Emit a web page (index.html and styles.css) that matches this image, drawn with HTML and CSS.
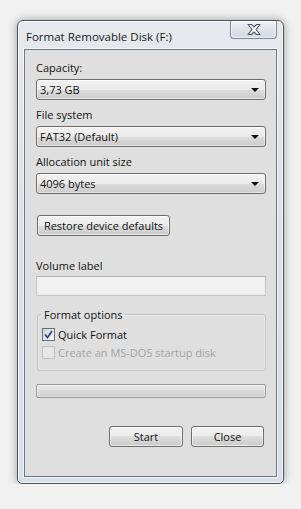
FILE: index.html
```html
<!DOCTYPE html>
<html lang="en">
	<head>
		<meta charset="UTF-8">
		<title>Format Removable Disk (F:)</title>
		<link rel="stylesheet" href="styles.css">
	</head>
	<body>
		<div class="window">
			<div class="titlebar">
				<span class="title">Format Removable Disk (F:)</span>
				<span class="close">
					<svg width="14" height="11" viewBox="0 0 14 11">
						<polygon points="1,0.5 4.5,0.5 7,3 9.5,0.5 13,0.5 9,5.5 13,10.5 9.5,10.5 7,8 4.5,10.5 1,10.5 5,5.5" fill="#fbfbfb" stroke="#4f5863" stroke-width="1.1" stroke-linejoin="round"/>
					</svg>
				</span>
			</div>
			<div class="client">
				<p class="lbl first">Capacity:</p>
				<div class="combo"><span>3,73 GB</span><i class="arrow"></i></div>

				<p class="lbl">File system</p>
				<div class="combo"><span>FAT32 (Default)</span><i class="arrow"></i></div>

				<p class="lbl">Allocation unit size</p>
				<div class="combo"><span>4096 bytes</span><i class="arrow"></i></div>

				<div class="btn restore">Restore device defaults</div>

				<p class="lbl vol">Volume label</p>
				<div class="textbox"></div>

				<fieldset class="group">
					<legend>Format options</legend>
					<div class="check">
						<span class="box on">
							<svg width="9" height="9" viewBox="0 0 9 9">
								<path d="M1 4.5 L3.5 7.5 L8 1" fill="none" stroke="#2c4a8a" stroke-width="1.8"/>
							</svg>
						</span>
						<span>Quick Format</span>
					</div>
					<div class="check off">
						<span class="box"></span>
						<span>Create an MS-DOS startup disk</span>
					</div>
				</fieldset>

				<div class="progress"></div>

				<div class="actions">
					<div class="btn start">Start</div>
					<div class="btn close-btn">Close</div>
				</div>
			</div>
		</div>
	</body>
</html>
```
FILE: styles.css
```css
* {
	margin: 0;
	padding: 0;
	box-sizing: border-box;
}

body {
	background: #f0f0f0;
	font-family: "Open Sans", "Noto Sans", sans-serif;
	font-size: 11px;
	color: #111;
}

/*窗口*/
.window {
	width: 267px;
	height: 464px;
	margin: 20px 0 0 17px;
	padding: 0 6px 6px;
	display: flex;
	flex-direction: column;
	border: 1px solid #4e545b;
	border-radius: 6px 6px 5px 5px;
	background: linear-gradient(#e6e9ed, #dbe2ea 40%, #d7dfe8);
	box-shadow: 0 0 8px rgba(0, 0, 0, 0.35), inset 0 0 0 1px rgba(255, 255, 255, 0.7);
}

.titlebar {
	height: 28px;
	display: flex;
	justify-content: space-between;
	align-items: flex-start;
}

.title {
	padding: 8px 0 0 2px;
	line-height: 16px;
	font-size: 11.5px;
	color: #1a1a1a;
}

.close {
	width: 47px;
	height: 18px;
	display: flex;
	align-items: center;
	justify-content: center;
	border: 1px solid #7e8792;
	border-top: none;
	border-radius: 0 0 4px 4px;
	background: linear-gradient(#eef1f4, #dfe4ea 50%, #d3dae3);
	box-shadow: inset 0 0 0 1px rgba(255, 255, 255, 0.6);
}

.client {
	flex: 1;
	padding: 0 10px 0 11px;
	display: flex;
	flex-direction: column;
	background: #dfdfdf;
	border: 1px solid #6f7780;
	box-shadow: 0 0 0 1px rgba(255, 255, 255, 0.6);
}

/*表单*/
.lbl {
	height: 15px;
	line-height: 15px;
	margin-top: 7px;
	margin-bottom: 4px;
}

.lbl.first {
	margin-top: 10px;
}

.lbl.vol {
	margin-top: 22px;
	margin-bottom: 3px;
}

.combo {
	height: 21px;
	padding: 0 0 0 3px;
	display: flex;
	align-items: center;
	justify-content: space-between;
	border: 1px solid #6e6e6e;
	border-radius: 3px;
	background: linear-gradient(#f2f2f2, #ebebeb 50%, #dddddd 50%, #cbcbcb);
	box-shadow: inset 0 0 0 1px rgba(255, 255, 255, 0.5);
}

.arrow {
	width: 0;
	height: 0;
	margin-right: 6px;
	border-left: 4px solid transparent;
	border-right: 4px solid transparent;
	border-top: 4px solid #111;
}

.btn {
	height: 21px;
	line-height: 19px;
	text-align: center;
	border: 1px solid #6e6e6e;
	border-radius: 3px;
	background: linear-gradient(#f2f2f2, #ebebeb 50%, #dddddd 50%, #cbcbcb);
	box-shadow: inset 0 0 0 1px rgba(255, 255, 255, 0.6);
}

.restore {
	width: 133px;
	margin: 21px 0 0 1px;
}

.textbox {
	height: 20px;
	border: 1px solid #c6c6c6;
	border-top-color: #b4b4b4;
	background: #f0f0f0;
}

.group {
	width: 229px;
	margin: 11px 0 0 1px;
	padding: 5px 0 7px 4px;
	border: 1px solid #c4c4c4;
	border-radius: 3px;
	box-shadow: inset 0 0 0 1px rgba(255, 255, 255, 0.35);
}

.group legend {
	padding: 0 2px;
	line-height: 15px;
}

.check {
	height: 15px;
	margin-bottom: 3px;
	display: flex;
	align-items: center;
	gap: 3px;
}

.check .box {
	width: 13px;
	height: 13px;
	display: flex;
	align-items: center;
	justify-content: center;
	border: 1px solid #8a8a8a;
	background: linear-gradient(135deg, #d8d8d8, #f6f6f6);
}

.check .box.on {
	border-color: #6b6f75;
	background: linear-gradient(135deg, #cfd3da, #f4f5f7);
}

.check.off {
	color: #a3a3a3;
}

.check.off .box {
	border-color: #c2c2c2;
	background: #e6e6e6;
}

.progress {
	height: 14px;
	margin-top: 13px;
	border: 1px solid #9a9a9a;
	border-radius: 2px;
	background: linear-gradient(#e9e9e9, #dcdcdc 50%, #cdcdcd);
	box-shadow: inset 0 0 0 1px rgba(255, 255, 255, 0.4);
}

.actions {
	margin: 28px 2px 0 0;
	display: flex;
	justify-content: flex-end;
	gap: 8px;
}

.start {
	width: 74px;
}

.close-btn {
	width: 73px;
}
```
